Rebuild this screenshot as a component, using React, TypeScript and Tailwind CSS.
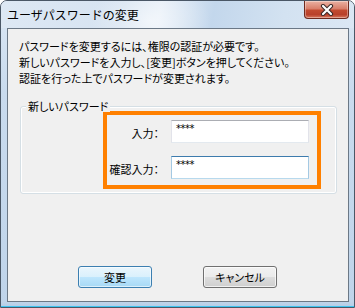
export default function App() {
  return (
    <div className="w-[355px] h-[308px] flex flex-col rounded-t-[7px] border border-[#4a5766] overflow-hidden bg-[linear-gradient(to_bottom,#dbe7f4_0%,#c9dbee_30%,#bfd4ea_100%)] font-['Noto_Sans_CJK_JP',sans-serif] text-black">
      {/* Title bar */}
      <div className="h-[27px] flex justify-between bg-[radial-gradient(ellipse_60px_40px_at_150px_20px,rgba(255,255,255,0.55),rgba(255,255,255,0)),linear-gradient(100deg,#dde8f4_0%,#d6e3f1_35%,#e4edf7_45%,#c3d7ec_60%,#d3e2f1_80%,#dbe7f4_100%)]">
        <span className="pl-[6px] self-center text-[12px] leading-[14px] pt-[1px]">ユーザパスワードの変更</span>
        <div className="mr-[5px] w-[45px] h-[18px] rounded-b-[4px] border border-t-0 border-[#6e2a1f] bg-[linear-gradient(to_bottom,#eab2a3_0%,#d97f6b_45%,#c24a30_55%,#b8402a_80%,#d9785f_100%)] flex items-center justify-center shadow-[inset_0_0_0_1px_rgba(255,255,255,0.35)]">
          <svg width="14" height="12" viewBox="0 0 14 12">
            <path d="M3 2 L11 10 M11 2 L3 10" stroke="#3b2a28" strokeWidth="4.2" strokeLinecap="round" />
            <path d="M3 2 L11 10 M11 2 L3 10" stroke="#ffffff" strokeWidth="2.2" strokeLinecap="round" />
          </svg>
        </div>
      </div>

      {/* Client area */}
      <div className="ml-[6px] w-[342px] h-[274px] border border-[#6b7886] bg-[#f0f0f0] flex flex-col text-[11px] [font-feature-settings:'palt']">
        <div className="pl-[11px] pt-[9px] leading-[16px]">
          <p>パスワードを変更するには、権限の認証が必要です。</p>
          <p>新しいパスワードを入力し、[変更]ボタンを押してください。</p>
          <p>認証を行った上でパスワードが変更されます。</p>
        </div>

        <div className="relative ml-[12px] mt-[20px] w-[317px] h-[88px] rounded-[3px] border border-[#d5dfe5] shadow-[inset_0_0_0_1px_#ffffff] pt-[4px]">
          <span className="absolute left-[5px] -top-[7px] px-[2px] bg-[#f0f0f0] leading-[12px]">新しいパスワード</span>
          <div className="ml-[82px] w-[218px] h-[78px] border-[4px] border-[#ff8000] pt-[5px] pl-[1px]">
            <div className="grid grid-cols-[51px_138px] gap-x-[12px] gap-y-[13px] items-center">
              <span className="text-right leading-[12px] pt-[3px]">入力：</span>
              <div className="h-[23px] bg-white border border-[#e2e3ea] border-t-[#abadb3] border-b-[#e3e9ef] pl-[4px] pt-[3px] text-[10px] leading-[10px] font-['DejaVu_Sans',sans-serif] tracking-[-0.5px]">****</div>
              <span className="text-right leading-[12px] pt-[3px]">確認入力：</span>
              <div className="h-[23px] bg-white border border-[#a4c9e3] border-t-[#3d7bad] border-b-[#b7d9ed] pl-[4px] pt-[3px] text-[10px] leading-[10px] font-['DejaVu_Sans',sans-serif] tracking-[-0.5px]">****</div>
            </div>
          </div>
        </div>

        <div className="flex ml-[70px] mt-[72px] gap-[51px]">
          <div className="w-[74px] h-[22px] rounded-[3px] border border-[#3c7fb1] shadow-[inset_0_0_0_1px_rgba(255,255,255,0.6)] bg-[linear-gradient(to_bottom,#eaf6fd_0%,#d9f0fc_50%,#bee6fd_50%,#a7d9f5_100%)] flex items-center justify-center leading-[12px]">変更</div>
          <div className="w-[74px] h-[22px] rounded-[3px] border border-[#707070] shadow-[inset_0_0_0_1px_rgba(255,255,255,0.7)] bg-[linear-gradient(to_bottom,#f2f2f2_0%,#ebebeb_50%,#dddddd_50%,#cfcfcf_100%)] flex items-center justify-center leading-[12px]">キャンセル</div>
        </div>
      </div>

      {/* Bottom frame */}
      <div className="flex-1 bg-[linear-gradient(to_bottom,#bfd4ea_0%,#b7cfe8_70%,#3ec3ef_80%,#3ec3ef_100%)]" />
    </div>
  );
}
